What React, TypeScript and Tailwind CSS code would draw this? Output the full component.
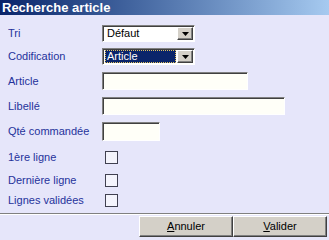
import React from 'react';

const sunken =
  'border border-t-[#808080] border-l-[#808080] border-b-white border-r-white shadow-[inset_1px_1px_0_#404040]';
const raised =
  'border border-t-white border-l-white border-b-[#404040] border-r-[#404040] shadow-[inset_-1px_-1px_0_#808080]';

const Label = ({ children }: { children: React.ReactNode }) => (
  <div className="w-[102px] pl-[8px] text-[11px] leading-none text-[#25329a]">{children}</div>
);

const DropArrow = () => (
  <div className={`w-[16px] h-full bg-[#d4d0c8] flex items-center justify-center ${raised}`}>
    <svg width="7" height="4" viewBox="0 0 7 4">
      <path d="M0 0h7L3.5 4z" fill="#000" />
    </svg>
  </div>
);

const Select = ({ value, focused }: { value: string; focused?: boolean }) => (
  <div className={`w-[93px] h-[17px] bg-white flex items-stretch p-[1px] ${sunken}`}>
    <div className="flex-1 flex items-center pl-[1px] pr-[1px]">
      {focused ? (
        <div className="w-full h-[13px] bg-[#0a246a] text-white border border-dotted border-[#e0c060] flex items-center pl-[1px] text-[11px] leading-none">
          {value}
        </div>
      ) : (
        <span className="pl-[2px] text-[11px] leading-none text-black">{value}</span>
      )}
    </div>
    <DropArrow />
  </div>
);

const Input = ({ w, h }: { w: string; h: string }) => (
  <div className={`${w} ${h} bg-[#fffff8] ${sunken}`} />
);

const Check = () => <div className="ml-[3px] w-[13px] h-[13px] bg-[#f4f4fc] border border-[#404050]" />;

const Btn = ({ first, rest }: { first: string; rest: string }) => (
  <div className={`w-[94px] h-[21px] bg-[#d4d0c8] flex items-center justify-center text-[11px] leading-none text-black ${raised}`}>
    <span>
      <span className="underline">{first}</span>
      {rest}
    </span>
  </div>
);

export default function App() {
  return (
    <div
      className="w-[329px] h-[240px] bg-[#e6e6fa] flex flex-col overflow-hidden"
      style={{ fontFamily: 'Tahoma, "Liberation Sans", Arial, sans-serif' }}
    >
      <div className="h-[15px] bg-gradient-to-r from-[#0a246a] to-[#a6caf0] flex items-center pl-[2px]">
        <span className="text-white font-bold text-[13px] leading-none">Recherche article</span>
      </div>

      <div className="mt-[10px] flex items-center h-[17px]">
        <Label>Tri</Label>
        <Select value="Défaut" />
      </div>
      <div className="mt-[6px] flex items-center h-[17px]">
        <Label>Codification</Label>
        <Select value="Article" focused />
      </div>
      <div className="mt-[7px] flex items-center h-[18px]">
        <Label>Article</Label>
        <Input w="w-[146px]" h="h-[18px]" />
      </div>
      <div className="mt-[7px] flex items-center h-[18px]">
        <Label>Libellé</Label>
        <Input w="w-[183px]" h="h-[18px]" />
      </div>
      <div className="mt-[7px] flex items-center h-[19px]">
        <Label>Qté commandée</Label>
        <Input w="w-[58px]" h="h-[19px]" />
      </div>
      <div className="mt-[10px] flex items-center h-[13px]">
        <Label>1ère ligne</Label>
        <Check />
      </div>
      <div className="mt-[10px] flex items-center h-[13px]">
        <Label>Dernière ligne</Label>
        <Check />
      </div>
      <div className="mt-[7px] flex items-center h-[13px]">
        <Label>Lignes validées</Label>
        <Check />
      </div>

      <div className="mt-[6px] h-[2px] border-t border-t-[#808080] border-b border-b-white" />

      <div className="mt-[1px] flex justify-end pr-[2px]">
        <Btn first="A" rest="nnuler" />
        <Btn first="V" rest="alider" />
      </div>
    </div>
  );
}
